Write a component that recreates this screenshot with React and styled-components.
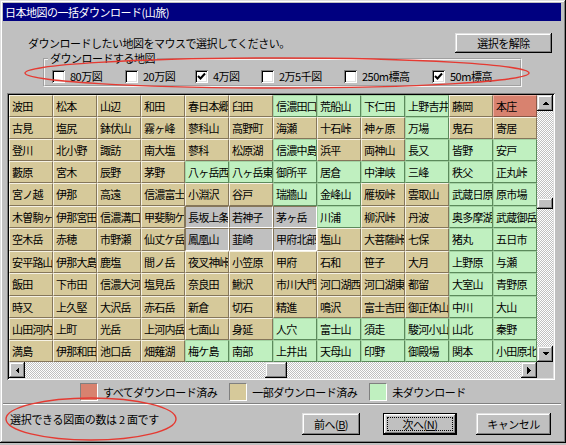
import React from "react";
import styled, { createGlobalStyle, css } from "styled-components";

const GlobalStyle = createGlobalStyle`
  html, body {
    margin: 0;
    padding: 0;
    background: #c0c0c0;
  }
  body {
    font-family: "Noto Sans CJK JP", "Noto Sans", sans-serif;
    font-size: 11px;
    letter-spacing: -0.5px;
    color: #000;
  }
`;

const raised = css`
  background: #c0c0c0;
  box-shadow: inset -1px -1px #000, inset 1px 1px #dfdfdf,
    inset -2px -2px #808080, inset 2px 2px #fff;
`;

const sunken = css`
  box-shadow: inset 1px 1px #808080, inset -1px -1px #fff,
    inset 2px 2px #000, inset -2px -2px #dfdfdf;
`;

const Window = styled.div`
  position: relative;
  width: 566px;
  height: 443px;
  box-sizing: border-box;
  padding: 3px 5px 3px 3px;
  background: #c0c0c0;
  box-shadow: inset -1px -1px #000, inset 1px 1px #dfdfdf,
    inset -2px -2px #808080, inset 2px 2px #fff;
  display: flex;
  flex-direction: column;
  overflow: hidden;
`;

const TitleBar = styled.div`
  height: 18px;
  line-height: 18px;
  padding-left: 2px;
  background: #000080;
  color: #fff;
`;

const Header = styled.div`
  display: flex;
  align-items: center;
  justify-content: space-between;
  height: 20px;
  margin-top: 12px;
  padding: 0 9px 0 25px;
`;

const Button = styled.button`
  ${raised};
  width: ${({ $w }) => $w}px;
  height: ${({ $h }) => $h || 22}px;
  border: none;
  padding: 0;
  font: inherit;
  letter-spacing: inherit;
  color: #000;
  display: flex;
  align-items: center;
  justify-content: center;

  ${({ $default }) =>
    $default &&
    css`
      box-shadow: inset 0 0 0 1px #000, inset -2px -2px #000, inset 2px 2px #fff,
        inset -3px -3px #808080, inset 3px 3px #dfdfdf;
    `}
`;

const Focus = styled.span`
  display: flex;
  align-items: center;
  justify-content: center;
  box-sizing: border-box;
  width: calc(100% - 8px);
  height: calc(100% - 8px);
  border: 1px dotted #000;
`;

const Group = styled.fieldset`
  display: flex;
  align-items: center;
  margin: -1px 0 0 40px;
  width: 479px;
  box-sizing: border-box;
  min-inline-size: 0;
  padding: 5px 0 2px 7px;
  border: 2px groove #f4f4f4;
`;

const GroupTitle = styled.legend`
  margin-left: -4px;
  padding: 0 2px;
  line-height: 13px;
`;

const CheckItem = styled.label`
  display: flex;
  align-items: center;
  width: ${({ $w }) => ($w ? `${$w}px` : "auto")};
  height: 13px;
`;

const CheckBox = styled.span`
  ${sunken};
  flex: none;
  width: 13px;
  height: 13px;
  background: #fff;
  display: flex;
  align-items: center;
  justify-content: center;
`;

const CheckLabel = styled.span`
  margin-left: 5px;
  line-height: 13px;
  white-space: nowrap;
`;

const GridFrame = styled.div`
  ${sunken};
  margin: 6px 0 0 4px;
  width: 548px;
  padding: 2px;
  box-sizing: border-box;
  background: #c0c0c0;
`;

const Grid = styled.div`
  display: grid;
  grid-template-columns: repeat(12, 44px) 16px;
  grid-template-rows: 22px 22px 22px 22px 23px 22px 23px 22px 23px 22px 22px 22px 16px;
`;

const cellTones = {
  T: css`
    background: #d6c99a;
    border-color: #f6f2e4 #85765a #85765a #f6f2e4;
  `,
  G: css`
    background: #c0f0c0;
    border-color: #a4d4a4 #5c8a5c #5c8a5c #a4d4a4;
  `,
  R: css`
    background: #d8826f;
    border-color: #eeb0a2 #8a5646 #8a5646 #eeb0a2;
  `,
  S: css`
    background: #c0c0c0;
    border-color: #85765a #fff #fff #85765a;
  `,
};

const Cell = styled.div`
  box-sizing: border-box;
  border-style: solid;
  border-width: 1px;
  padding-left: 2px;
  line-height: 20px;
  letter-spacing: -0.8px;
  white-space: nowrap;
  overflow: hidden;
  ${({ $tone }) => cellTones[$tone]};
`;

const track = css`
  background: repeating-conic-gradient(#c0c0c0 0 25%, #fff 0 50%) 0 0 / 2px 2px;
  display: flex;
`;

const VScroll = styled.div`
  ${track};
  grid-column: 13;
  grid-row: 1 / 13;
  flex-direction: column;
`;

const HScroll = styled.div`
  ${track};
  grid-column: 1 / 13;
  grid-row: 13;
`;

const Corner = styled.div`
  grid-column: 13;
  grid-row: 13;
  background: #c0c0c0;
`;

const ArrowButton = styled.div`
  ${raised};
  flex: none;
  width: 16px;
  height: 16px;
  display: flex;
  align-items: center;
  justify-content: center;
  ${({ $end }) => $end && css`margin-${$end}: auto;`}
`;

const Thumb = styled.div`
  ${raised};
  flex: none;
  width: ${({ $w }) => $w}px;
  height: ${({ $h }) => $h}px;
  ${({ $vertical, $offset }) =>
    $vertical ? `margin-top: ${$offset}px;` : `margin-left: ${$offset}px;`}
`;

const LegendRow = styled.div`
  display: flex;
  align-items: center;
  height: 18px;
  margin-top: 3px;
  padding-left: 77px;
`;

const LegendItem = styled.div`
  display: flex;
  align-items: center;
  margin-right: 12px;
`;

const Swatch = styled.span`
  flex: none;
  width: 18px;
  height: 18px;
  box-sizing: border-box;
  border: 1px solid;
  border-color: #808080 #fff #fff #808080;
  background: ${({ $color }) => $color};
  margin-right: 5px;
`;

const Separator = styled.div`
  height: 0;
  margin-top: 2px;
  border-top: 1px solid #808080;
  border-bottom: 1px solid #fff;
`;

const Footer = styled.div`
  display: flex;
  align-items: flex-start;
  padding: 8px 10px 0 7px;
`;

const Status = styled.div`
  margin-top: -1px;
  line-height: 14px;
  margin-right: auto;
  letter-spacing: -0.3px;
`;

const FooterButtons = styled.div`
  display: flex;
`;

const Marks = styled.svg`
  position: absolute;
  left: 0;
  top: 0;
  pointer-events: none;
`;

const Arrow = ({ dir }) => {
  const pts = {
    up: "0,4 7,4 3.5,0.5",
    down: "0,0 7,0 3.5,3.5",
    left: "4,0 4,7 0.5,3.5",
    right: "0,0 0,7 3.5,3.5",
  }[dir];
  const vertical = dir === "up" || dir === "down";
  return (
    <svg width={vertical ? 7 : 4} height={vertical ? 4 : 7} shapeRendering="crispEdges">
      <polygon points={pts} fill="#000" />
    </svg>
  );
};

const CheckMark = () => (
  <svg width="9" height="9" viewBox="0 0 9 9">
    <polyline points="1,4 3.5,6.5 8,1.5" fill="none" stroke="#000" strokeWidth="2" />
  </svg>
);

const LAYERS = [
  { label: "80万図", on: false, w: 73 },
  { label: "20万図", on: false, w: 70 },
  { label: "4万図", on: true, w: 66 },
  { label: "2万5千図", on: false, w: 83 },
  { label: "250m標高", on: false, w: 88 },
  { label: "50m標高", on: true },
];

const NAMES = [
  "波田 松本 山辺 和田 春日本郷 臼田 信濃田口 荒船山 下仁田 上野吉井 藤岡 本庄",
  "古見 塩尻 鉢伏山 霧ヶ峰 蓼科山 高野町 海瀬 十石峠 神ヶ原 万場 鬼石 寄居",
  "登川 北小野 諏訪 南大塩 蓼科 松原湖 信濃中島 浜平 両神山 長又 皆野 安戸",
  "藪原 宮木 辰野 茅野 八ヶ岳西部 八ヶ岳東部 御所平 居倉 中津峡 三峰 秩父 正丸峠",
  "宮ノ越 伊那 高遠 信濃富士見 小淵沢 谷戸 瑞牆山 金峰山 雁坂峠 雲取山 武蔵日原 原市場",
  "木曽駒ヶ岳 伊那宮田 信濃溝口 甲斐駒ケ岳 長坂上条 若神子 茅ヶ岳 川浦 柳沢峠 丹波 奥多摩湖 武蔵御岳",
  "空木岳 赤穂 市野瀬 仙丈ケ岳 鳳凰山 韮崎 甲府北部 塩山 大菩薩峠 七保 猪丸 五日市",
  "安平路山 伊那大島 鹿塩 間ノ岳 夜叉神峠 小笠原 甲府 石和 笹子 大月 上野原 与瀬",
  "飯田 下市田 信濃大河原 塩見岳 奈良田 鰍沢 市川大門 河口湖西 河口湖東 都留 大室山 青野原",
  "時又 上久堅 大沢岳 赤石岳 新倉 切石 精進 鳴沢 富士吉田 御正体山 中川 大山",
  "山田河内 上町 光岳 上河内岳 七面山 身延 人穴 富士山 須走 駿河小山 山北 秦野",
  "満島 伊那和田 池口岳 畑薙湖 梅ケ島 南部 上井出 天母山 印野 御殿場 関本 小田原北",
];

// T = 一部済み, G = 未, R = すべて済み, S = 選択中
const TONES = [
  "TTTTTTGGGGTR",
  "TTTTTTTTTGTT",
  "TTTTTTGTTGGG",
  "TTTTGGGGGGGG",
  "TTTTTTGGTTGG",
  "TTTTSSSGTTGG",
  "TTTTSSSTTTGG",
  "TTTTTTTTTTGG",
  "TTTTTTTTTTGG",
  "TTTTTTTTTTGG",
  "TTTTTTGGGGGG",
  "TTTTGGGGGGGG",
];

const LEGEND = [
  { color: "#d8826f", label: "すべてダウンロード済み" },
  { color: "#d6c99a", label: "一部ダウンロード済み" },
  { color: "#c0f0c0", label: "未ダウンロード" },
];

export default function App() {
  return (
    <>
      <GlobalStyle />
      <Window>
        <TitleBar>日本地図の一括ダウンロード(山旅)</TitleBar>

        <Header>
          <span>ダウンロードしたい地図をマウスで選択してください。</span>
          <Button $w={97} $h={20}>選択を解除</Button>
        </Header>

        <Group>
          <GroupTitle>ダウンロードする地図</GroupTitle>
          {LAYERS.map((l) => (
            <CheckItem key={l.label} $w={l.w}>
              <CheckBox>{l.on && <CheckMark />}</CheckBox>
              <CheckLabel>{l.label}</CheckLabel>
            </CheckItem>
          ))}
        </Group>

        <GridFrame>
          <Grid>
            {NAMES.map((row, r) =>
              row.split(" ").map((name, c) => (
                <Cell key={`${r}-${c}`} $tone={TONES[r][c]}>
                  {name}
                </Cell>
              ))
            )}
            <VScroll>
              <ArrowButton>
                <Arrow dir="up" />
              </ArrowButton>
              <Thumb $vertical $offset={87} $w={16} $h={11} />
              <ArrowButton $end="top">
                <Arrow dir="down" />
              </ArrowButton>
            </VScroll>
            <HScroll>
              <ArrowButton>
                <Arrow dir="left" />
              </ArrowButton>
              <Thumb $offset={240} $w={22} $h={16} />
              <ArrowButton $end="left">
                <Arrow dir="right" />
              </ArrowButton>
            </HScroll>
            <Corner />
          </Grid>
        </GridFrame>

        <LegendRow>
          {LEGEND.map((l) => (
            <LegendItem key={l.label}>
              <Swatch $color={l.color} />
              <span>{l.label}</span>
            </LegendItem>
          ))}
        </LegendRow>

        <Separator />

        <Footer>
          <Status>選択できる図面の数は 2 面です</Status>
          <FooterButtons>
            <Button $w={58}>
              前へ(<u>B</u>)
            </Button>
            <Button $w={74} $default style={{ marginLeft: 23 }}>
              <Focus>
                次へ(<u>N</u>)
              </Focus>
            </Button>
            <Button $w={75} style={{ marginLeft: 19 }}>
              キャンセル
            </Button>
          </FooterButtons>
        </Footer>

        <Marks width="566" height="443">
          <ellipse cx="277" cy="73" rx="252" ry="15" fill="none" stroke="#e53a32" strokeWidth="1.4" />
          <ellipse cx="91" cy="419" rx="85" ry="21" fill="none" stroke="#e53a32" strokeWidth="1.4" />
        </Marks>
      </Window>
    </>
  );
}
